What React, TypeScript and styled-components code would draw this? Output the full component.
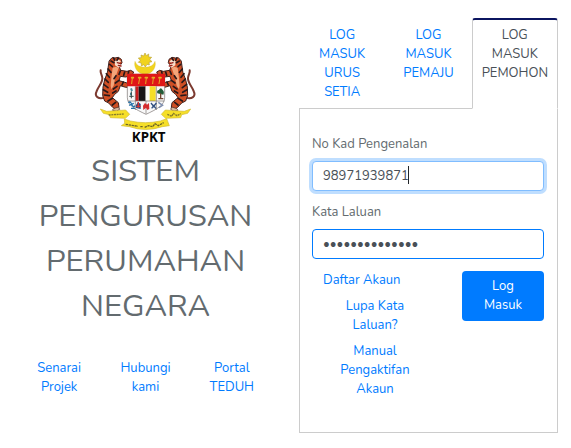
import React from "react";
import styled, { createGlobalStyle, css } from "styled-components";

const GlobalStyle = createGlobalStyle`
  *, *::before, *::after { box-sizing: border-box; }
  body {
    margin: 0;
    background: #fff;
    color: #636b6f;
    font-family: Nunito, Lato, "Open Sans", sans-serif;
    font-size: 13px;
    line-height: 19px;
  }
`;

const Page = styled.main`
  display: grid;
  grid-template-columns: minmax(0, 1fr) minmax(0, 1fr);
  gap: 24px;
  padding: 18px 13px 15px 16px;
`;

const Brand = styled.section`
  padding-top: 27px;
  text-align: center;
`;

const Crest = styled.svg`
  display: block;
  width: 120px;
  height: 104px;
  margin: 0 auto;
`;

const Title = styled.h1`
  margin: 0 0 30px;
  font-size: 31px;
  font-weight: 400;
  line-height: 45px;
`;

const LinkRow = styled.nav`
  display: grid;
  grid-template-columns: repeat(3, minmax(0, 1fr));
`;

const TextLink = styled.a`
  color: #007bff;
  text-decoration: none;
`;

const BrandLink = styled(TextLink)`
  padding: 0 16px;
`;

const Tabs = styled.div`
  display: grid;
  grid-template-columns: repeat(3, minmax(0, 1fr));
`;

const Tab = styled.button<{ $active?: boolean }>`
  display: flex;
  justify-content: center;
  padding: 6px 8px;
  border: 0 solid #ccc;
  border-top: 2px solid transparent;
  border-bottom: 1px solid #ccc;
  background: #fff;
  color: #007bff;
  font: inherit;
  text-align: center;
  cursor: pointer;
  ${({ $active }) =>
    $active &&
    css`
      border-width: 2px 1px 1px;
      border-top-color: #0b1560;
      border-bottom-color: #fff;
      border-radius: 3px 3px 0 0;
      color: #495057;
    `}
`;

const Form = styled.form`
  padding: 26px 13px 33px 12px;
  border: 1px solid #ccc;
  border-top: 0;
`;

const Label = styled.label`
  display: block;
  margin-bottom: 7px;
`;

const Field = styled.div`
  position: relative;
  margin-bottom: 12px;
`;

const Input = styled.input`
  display: block;
  width: 100%;
  height: 30px;
  padding: 4px 10px;
  border: 1px solid #007bff;
  border-radius: 4px;
  outline: 0;
  background: #fff;
  color: #495057;
  caret-color: transparent;
  font: inherit;
  &:focus {
    border-color: #80bdff;
    box-shadow: 0 0 0 3px #bfdeff;
  }
`;

const Caret = styled.span`
  position: absolute;
  top: 5px;
  left: 96px;
  width: 1px;
  height: 18px;
  background: #212529;
  pointer-events: none;
`;

const Actions = styled.div`
  display: grid;
  grid-template-columns: minmax(0, 126fr) minmax(0, 82fr);
  gap: 24px;
  align-items: start;
`;

const HelpLinks = styled.div`
  display: flex;
  flex-direction: column;
  gap: 7px;
`;

const HelpLink = styled(TextLink)<{ $start?: boolean }>`
  padding: 0 ${({ $start }) => ($start ? "11px" : "24px")};
  text-align: ${({ $start }) => ($start ? "left" : "center")};
`;

const Submit = styled.button`
  padding: 6px 16px;
  border: 0;
  border-radius: 4px;
  background: #007bff;
  color: #fff;
  font: inherit;
  cursor: pointer;
`;

const Tiger = () => (
  <g strokeLinecap="round" strokeLinejoin="round">
    <path d="M55 158C38 164 24 154 32 139C36 124 50 114 49 99C48 88 42 84 44 76" fill="none" stroke="#7c3a30" strokeWidth="6" />
    <path d="M70 47L78 38L87 39L97 37L106 43L108 53L100 65L104 76L123 79L134 76L143 81L139 90L119 96L103 94L99 107L120 113L131 117L132 127L119 127L103 122L97 139L86 148L79 158L97 173L99 187L89 193L80 187L68 174L56 168L50 152L51 126L56 104L64 83Z" fill="#cf4f25" stroke="#42201c" strokeWidth="3" />
    <path d="M80 68L90 65L98 69L93 83L87 101L83 122L76 133L74 122L76 99Z" fill="#f3a57a" />
    <path d="M86 48L96 43L105 49L99 55L107 61L98 68L87 61Z" fill="#f6dfcc" />
    <path d="M94 53L104 56M97 61L105 63" stroke="#9c211c" strokeWidth="4" />
    <path d="M75 48L84 53M71 58L79 65M66 72L75 82M61 86L70 97M57 102L67 112M53 118L66 128M52 134L65 142M55 150L70 152M66 168L79 160M79 180L89 172M103 78L99 88M116 81L113 91M128 80L126 90M90 92L84 101M99 106L88 114M112 111L108 120M93 124L82 132M90 138L80 144M83 39L86 46M97 40L93 46" fill="none" stroke="#28181a" strokeWidth="5" />
    <path d="M85 190L98 186L101 193L91 199L80 196Z" fill="#d8b9a0" stroke="#40201b" strokeWidth="2" />
  </g>
);

const CrestLogo = () => (
  <Crest viewBox="0 0 360 312" role="img" aria-label="KPKT">
    <path d="M147 49A31 31 0 1 0 207 49A31 24 0 0 1 147 49Z" fill="#f1d31e" stroke="#d4b838" strokeWidth="1" />
    <path d="M177 24L181 32L188 27L188 36L197 37L191 43L198 50L189 52L190 60L183 58L178 66L173 59L166 63L166 54L157 52L163 46L157 39L166 38L165 30L173 33Z" fill="#f1d31e" stroke="#b9a33a" strokeWidth="2" />
    <Tiger />
    <g transform="translate(355 0) scale(-1 1)"><Tiger /></g>
    <path d="M124 88H236V157C236 182 211 193 180 208C149 193 124 182 124 157Z" fill="#f9f9f9" stroke="#756e6c" strokeWidth="2" />
    <path d="M123 86H237V124H123Z" fill="#df1717" />
    <g stroke="#e5ad23" strokeWidth="3" strokeLinecap="round">
      <path d="M139 99L137 116M161 99L158 116M181 99L179 116M202 99L200 116M222 99L219 116" />
      <path d="M137 98H142M158 98H164M178 98H184M199 98H205M219 98H225" strokeWidth="5" />
    </g>
    <path d="M148 124H158V168H148Z" fill="#c91e20" />
    <path d="M158 124H179V168H158Z" fill="#171416" />
    <path d="M179 124H191V168H179Z" fill="#f9f9f5" />
    <path d="M191 124H209V168H191Z" fill="#f6df27" />
    <path d="M126 168H235M148 124V195M211 124V195M180 168V206" stroke="#77716e" strokeWidth="2" />
    <path d="M135 130L138 138M135 143V151" stroke="#478d99" strokeWidth="6" />
    <path d="M130 154H143M136 139V160" stroke="#3a4b49" strokeWidth="3" />
    <path d="M214 145Q211 136 219 135Q224 125 230 135Q236 140 232 149Z" fill="#245c38" />
    <path d="M224 145V161M217 161H232" stroke="#754732" strokeWidth="4" />
    <path d="M128 174Q131 168 135 174T143 174M130 182Q134 176 139 182T147 182M135 190H147" fill="none" stroke="#2372aa" strokeWidth="4" />
    <path d="M150 189V180L156 171L164 177V192Z" fill="#254b80" />
    <path d="M157 171V188M151 184H164" stroke="#d33434" strokeWidth="4" />
    <path d="M171 182L177 174L183 179L189 174L190 192L184 195L180 188L172 195Z" fill="#d52c2e" />
    <path d="M195 174L203 184L211 174M197 190L203 182L210 191" fill="none" stroke="#315080" strokeWidth="4" />
    <path d="M217 172L230 181L219 188" fill="none" stroke="#7d8dad" strokeWidth="4" />
    <path d="M43 192L62 199L94 197L119 195L131 208L118 220L73 218L70 209L52 205Z" fill="#f6df28" stroke="#d0bb35" strokeWidth="2" />
    <path d="M314 192L295 199L263 197L238 195L226 208L239 220L284 218L287 209L305 205Z" fill="#f6df28" stroke="#d0bb35" strokeWidth="2" />
    <path d="M115 222L133 228Q178 238 223 228L242 221L250 242L229 245Q179 262 130 245L106 242L116 235Z" fill="#f6df28" stroke="#d0bb35" strokeWidth="2" />
    <path d="M68 210L113 207M244 208L257 214L262 205L273 212L284 206" fill="none" stroke="#857b2b" strokeWidth="4" strokeDasharray="6 2" />
    <path d="M119 238L156 244M163 245H170M176 247L188 242L200 245L207 236L217 242L233 233" fill="none" stroke="#6b6428" strokeWidth="4" strokeDasharray="7 2" />
    <text x="188" y="290" textAnchor="middle" fontFamily="Noto Sans, sans-serif" fontSize="40" fontWeight="700" fill="#070707">KPKT</text>
  </Crest>
);

export default function App() {
  return (
    <>
      <GlobalStyle />
      <Page>
        <Brand>
          <CrestLogo />
          <Title>SISTEM PENGURUSAN PERUMAHAN NEGARA</Title>
          <LinkRow>
            <BrandLink href="#projek">Senarai Projek</BrandLink>
            <BrandLink href="#hubungi">Hubungi kami</BrandLink>
            <BrandLink href="#teduh">Portal TEDUH</BrandLink>
          </LinkRow>
        </Brand>
        <section>
          <Tabs role="tablist">
            <Tab type="button" role="tab" aria-selected="false">LOG<br />MASUK<br />URUS<br />SETIA</Tab>
            <Tab type="button" role="tab" aria-selected="false">LOG<br />MASUK<br />PEMAJU</Tab>
            <Tab type="button" role="tab" aria-selected="true" $active>LOG<br />MASUK<br />PEMOHON</Tab>
          </Tabs>
          <Form onSubmit={(e) => e.preventDefault()}>
            <Label htmlFor="ic">No Kad Pengenalan</Label>
            <Field>
              <Input id="ic" type="text" defaultValue="98971939871" autoFocus />
              <Caret />
            </Field>
            <Label htmlFor="password">Kata Laluan</Label>
            <Field>
              <Input id="password" type="password" defaultValue="katalaluan1234" />
            </Field>
            <Actions>
              <HelpLinks>
                <HelpLink href="#daftar" $start>Daftar Akaun</HelpLink>
                <HelpLink href="#lupa">Lupa Kata Laluan?</HelpLink>
                <HelpLink href="#manual">Manual Pengaktifan Akaun</HelpLink>
              </HelpLinks>
              <Submit type="submit">Log Masuk</Submit>
            </Actions>
          </Form>
        </section>
      </Page>
    </>
  );
}
